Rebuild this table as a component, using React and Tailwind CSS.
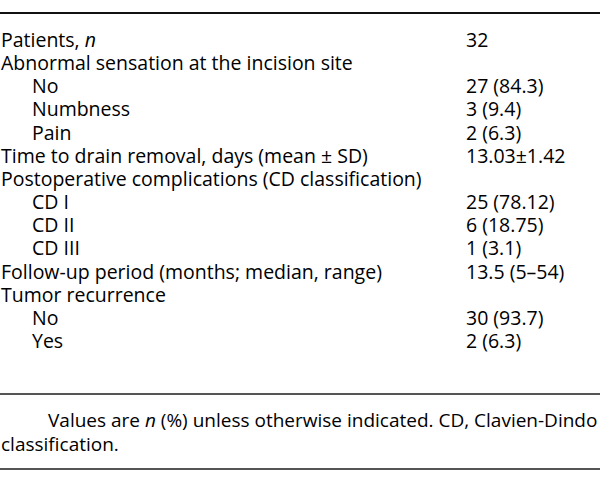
export default function App() {
  const rows = [
    { label: <>Patients, <i>n</i></>, value: "32" },
    { label: "Abnormal sensation at the incision site", value: "" },
    { label: "No", value: "27 (84.3)", sub: true },
    { label: "Numbness", value: "3 (9.4)", sub: true },
    { label: "Pain", value: "2 (6.3)", sub: true },
    { label: "Time to drain removal, days (mean ± SD)", value: "13.03±1.42" },
    { label: "Postoperative complications (CD classification)", value: "" },
    { label: "CD I", value: "25 (78.12)", sub: true },
    { label: "CD II", value: "6 (18.75)", sub: true },
    { label: "CD III", value: "1 (3.1)", sub: true },
    { label: "Follow-up period (months; median, range)", value: "13.5 (5–54)" },
    { label: "Tumor recurrence", value: "" },
    { label: "No", value: "30 (93.7)", sub: true },
    { label: "Yes", value: "2 (6.3)", sub: true },
  ]

  return (
    <div className="w-[600px] h-[492px] bg-white pt-3 text-black font-['Open_Sans',sans-serif] text-[19.5px]">
      <div className="border-t-2 border-[#111]" />

      {/* Table body */}
      <div className="pt-[14px] pb-[41px]">
        {rows.map((r, i) => (
          <div key={i} className="grid grid-cols-[466px_1fr] leading-[23.15px] whitespace-nowrap">
            <div className={r.sub ? "pl-8" : "pl-px"}>{r.label}</div>
            <div>{r.value}</div>
          </div>
        ))}
      </div>

      <div className="border-t-2 border-[#555]" />

      {/* Footnote */}
      <div className="pt-[13px] pb-[12px] leading-6 pl-px text-[19px] whitespace-nowrap">
        <p className="pl-12 -ml-px">
          Values are <i>n</i> (%) unless otherwise indicated. CD, Clavien-Dindo
        </p>
        <p>classification.</p>
      </div>

      <div className="border-t-2 border-[#555]" />
    </div>
  )
}
